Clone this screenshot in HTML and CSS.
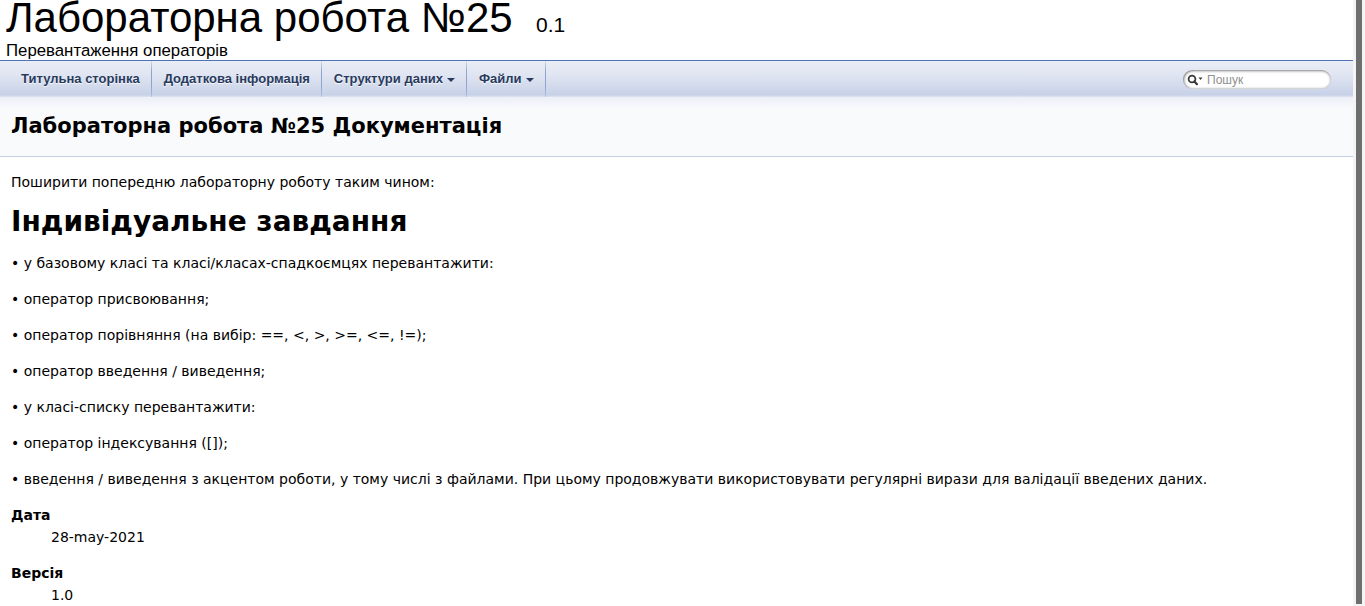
FILE: index.html
```html
<!DOCTYPE html>
<html lang="uk">
<head>
<meta charset="utf-8">
<title>Лабораторна робота №25: Лабораторна робота №25 Документація</title>
<link rel="stylesheet" href="styles.css">
</head>
<body>
<div class="page">
  <div class="main">
    <div class="titlearea">
      <div class="projectname">Лабораторна робота №25 &#160;<span class="projectnumber">0.1</span></div>
      <div class="projectbrief">Перевантаження операторів</div>
    </div>
    <nav class="menu">
      <ul class="menu-list">
        <li class="menu-item"><a class="menu-link" href="#">Титульна сторінка</a></li>
        <li class="menu-item"><a class="menu-link" href="#">Додаткова інформація</a></li>
        <li class="menu-item"><a class="menu-link has-sub" href="#">Структури даних<span class="sub-arrow"></span></a></li>
        <li class="menu-item"><a class="menu-link has-sub" href="#">Файли<span class="sub-arrow"></span></a></li>
      </ul>
      <div class="searchbox">
        <svg class="search-icon" width="17" height="12" viewBox="0 0 17 12">
          <circle cx="5" cy="5" r="3.4" fill="none" stroke="#3a3a3a" stroke-width="1.8"/>
          <line x1="7.4" y1="7.4" x2="10" y2="10.2" stroke="#3a3a3a" stroke-width="2.2" stroke-linecap="round"/>
          <polygon points="11.5,3.5 15.5,3.5 13.5,6" fill="#3a3a3a"/>
        </svg>
        <span class="search-field">Пошук</span>
      </div>
    </nav>
    <div class="header">
      <div class="headertitle">
        <div class="title">Лабораторна робота №25 Документація</div>
      </div>
    </div>
    <div class="contents">
      <p>Поширити попередню лабораторну роботу таким чином:</p>
      <h1 class="heading">Індивідуальне завдання</h1>
      <p>• у базовому класі та класі/класах-спадкоємцях перевантажити:</p>
      <p>• оператор присвоювання;</p>
      <p>• оператор порівняння (на вибір: ==, &lt;, &gt;, &gt;=, &lt;=, !=);</p>
      <p>• оператор введення / виведення;</p>
      <p>• у класі-списку перевантажити:</p>
      <p>• оператор індексування ([]);</p>
      <p>• введення / виведення з акцентом роботи, у тому числі з файлами. При цьому продовжувати використовувати регулярні вирази для валідації введених даних.</p>
      <dl class="section">
        <dt>Дата</dt>
        <dd>28-may-2021</dd>
      </dl>
      <dl class="section">
        <dt>Версія</dt>
        <dd>1.0</dd>
      </dl>
    </div>
  </div>
  <div class="scrollbar"><div class="thumb"></div></div>
</div>
</body>
</html>
```

FILE: styles.css
```css
html, body {
  margin: 0;
  padding: 0;
  background: #ffffff;
}

body {
  font: 400 14px/22px "DejaVu Sans", sans-serif;
  color: #000000;
}

.page {
  display: flex;
  height: 606px;
  overflow: hidden;
}

.main {
  flex: 1;
  min-width: 0;
  overflow: hidden;
}

.scrollbar {
  width: 12px;
  flex: none;
  background: #f4f4f4;
  display: flex;
  justify-content: center;
}

.thumb {
  width: 6px;
  height: 604px;
  background: #6e6e6e;
}

/* Title area */
.titlearea {
  border-bottom: 1px solid #5373b4;
  padding-left: 6px;
  height: 60px;
  font-family: "Liberation Sans", Arial, sans-serif;
}

.projectname {
  font-size: 42px;
  line-height: 36px;
  height: 36px;
}

.projectnumber {
  font-size: 21px;
  line-height: 1;
}

.projectbrief {
  font-size: 16.8px;
  line-height: 20px;
  margin-top: 5px;
}

/* Navigation bar */
.menu {
  height: 36px;
  display: flex;
  justify-content: space-between;
  align-items: center;
  background: linear-gradient(#e9edf6 0%, #e1e6f2 35%, #d2daec 70%, #c6d0e7 94%, #dfe4f0 100%);
}

.menu-list {
  list-style: none;
  margin: 0;
  padding: 0 0 0 9px;
  display: flex;
  height: 36px;
}

.menu-item {
  height: 36px;
}

.menu-link {
  display: block;
  height: 36px;
  padding: 0 12px;
  font: bold 13px/36px "Liberation Sans", Arial, sans-serif;
  color: #283a5d;
  text-decoration: none;
  text-shadow: 0 1px 1px rgba(255, 255, 255, 0.9);
  background-image: linear-gradient(rgba(140, 160, 206, 0.25), #8fa2cf 30%, #8fa2cf 70%, rgba(140, 160, 206, 0.35));
  background-size: 1px 100%;
  background-repeat: no-repeat;
  background-position: right top;
}

.sub-arrow {
  display: inline-block;
  width: 0;
  height: 0;
  margin-left: 4px;
  vertical-align: 1px;
  border-width: 4px 4px 0 4px;
  border-style: solid;
  border-color: #283a5d transparent transparent transparent;
}

.searchbox {
  margin-right: 22px;
  width: 148px;
  height: 19px;
  margin-top: 1px;
  border-radius: 10px;
  background: #ffffff;
  box-shadow: inset 0.5px 0.5px 3px 0 #555555;
  display: flex;
  align-items: center;
  box-sizing: border-box;
  padding-left: 4px;
}

.search-icon {
  flex: none;
  margin-right: 3px;
}

.search-field {
  font: 12px/1 "Liberation Sans", Arial, sans-serif;
  color: #909090;
}

/* Page header */
.header {
  background: linear-gradient(#eceff7 0px, #f9fafc 12px) #f9fafc;
  border-bottom: 1px solid #c4cfe5;
}

.headertitle {
  padding: 5px 5px 6px 9px;
}

.title {
  font: bold 21px/28px "DejaVu Sans", sans-serif;
  margin: 10px 2px;
}

/* Contents */
.contents {
  margin: 10px 8px 0 11px;
}

.contents p {
  margin: 14px 0;
}

.heading {
  font-size: 28px;
  font-weight: bold;
  line-height: 22px;
  margin: 18.4px 15px 18.4px 0;
}

.section {
  margin: 14px 0;
}

.section dt {
  font-weight: bold;
}

.section dd {
  margin-left: 40px;
}
```
